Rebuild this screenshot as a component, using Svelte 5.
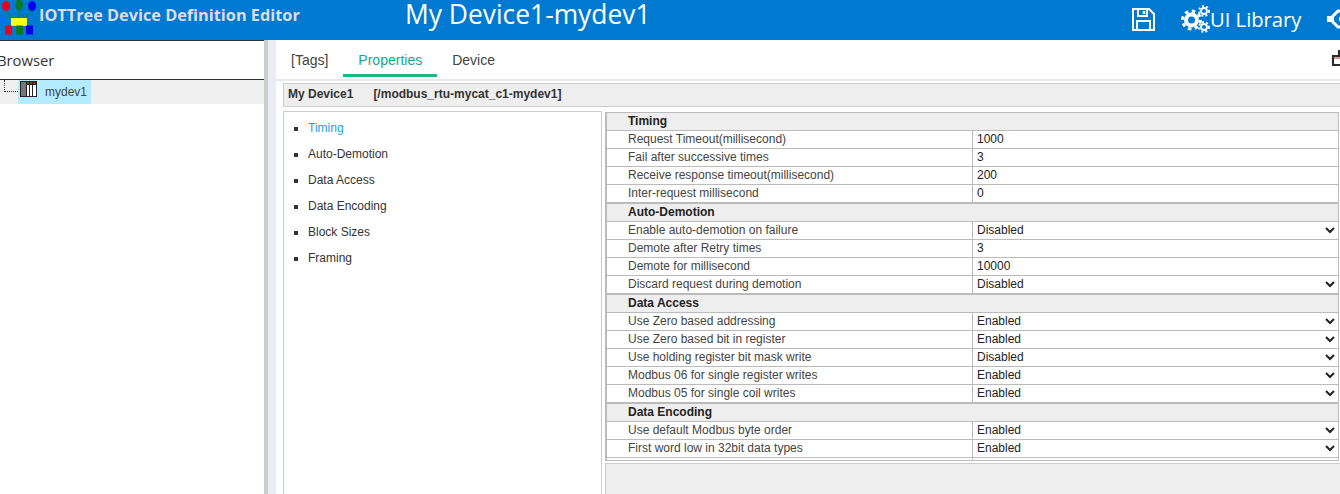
<script>
  const tabs = ['[Tags]', 'Properties', 'Device'];
  const nav = ['Timing', 'Auto-Demotion', 'Data Access', 'Data Encoding', 'Block Sizes', 'Framing'];
  const groups = [
    { title: 'Timing', rows: [
      ['Request Timeout(millisecond)', '1000'],
      ['Fail after successive times', '3'],
      ['Receive response timeout(millisecond)', '200'],
      ['Inter-request millisecond', '0']
    ]},
    { title: 'Auto-Demotion', rows: [
      ['Enable auto-demotion on failure', 'Disabled', true],
      ['Demote after Retry times', '3'],
      ['Demote for millisecond', '10000'],
      ['Discard request during demotion', 'Disabled', true]
    ]},
    { title: 'Data Access', rows: [
      ['Use Zero based addressing', 'Enabled', true],
      ['Use Zero based bit in register', 'Enabled', true],
      ['Use holding register bit mask write', 'Disabled', true],
      ['Modbus 06 for single register writes', 'Enabled', true],
      ['Modbus 05 for single coil writes', 'Enabled', true]
    ]},
    { title: 'Data Encoding', rows: [
      ['Use default Modbus byte order', 'Enabled', true],
      ['First word low in 32bit data types', 'Enabled', true],
      ['', '']
    ]}
  ];
</script>

<div class="page">
  <header class="top">
    <svg class="logo" width="36" height="40" viewBox="0 0 36 40">
      <path d="M6 10 L12 19 M19 12 L19 18 L14 19 M19 14 L26 18 M31 10 L26 19" stroke="#1a7a3a" stroke-width="1" fill="none"/>
      <ellipse cx="6" cy="6" rx="4" ry="5" fill="#e8001c"/>
      <ellipse cx="19" cy="5" rx="4" ry="5.500" fill="#0a7a2a"/>
      <ellipse cx="32" cy="6" rx="4" ry="5" fill="#0000f0"/>
      <rect x="11" y="18" width="16" height="8" fill="#ffff20"/>
      <rect x="5" y="25.500" width="7" height="9" fill="#f00018"/>
      <rect x="16" y="25.500" width="7" height="9" fill="#0a7a2a"/>
      <rect x="26" y="25.500" width="7" height="9" fill="#0000f0"/>
    </svg>
    <span class="brand">IOTTree Device Definition Editor</span>
    <span class="devname">My Device1-mydev1</span>
    <svg class="save" width="24" height="24" viewBox="0 0 24 24" fill="none" stroke="#fff" stroke-width="2">
      <path d="M2 2H18L23 7V23H2Z"/>
      <path d="M7 2V9H16V2"/>
      <path d="M6 23V14H19V23"/>
      <path d="M13 4V7" stroke-width="2.500"/>
    </svg>
    <svg class="cogs" width="30" height="30" viewBox="0 0 30 30" fill="none" stroke="#fff">
      <circle cx="10.500" cy="15" r="5.500" stroke-width="4"/>
      <circle cx="10.500" cy="15" r="9" stroke-width="3" stroke-dasharray="3.500 3.570"/>
      <circle cx="23" cy="6" r="3" stroke-width="1.800"/>
      <circle cx="23" cy="6" r="5" stroke-width="1.800" stroke-dasharray="2 2.190"/>
      <circle cx="23" cy="22" r="3" stroke-width="1.800"/>
      <circle cx="23" cy="22" r="5" stroke-width="1.800" stroke-dasharray="2 2.190"/>
    </svg>
    <span class="lib">UI Library</span>
    <svg class="more" width="24" height="30" viewBox="0 0 24 30" fill="none" stroke="#fff" stroke-width="3">
      <path d="M3 15L11 7H20M3 15L11 23H20"/>
      <path d="M0 15H7" stroke-width="6"/>
      <circle cx="15" cy="15" r="3" fill="#fff" stroke="none"/>
    </svg>
  </header>

  <div class="body">
    <aside class="side">
      <div class="side-title">Browser</div>
      <div class="tree-row">
        <span class="dots"></span>
        <span class="node">
          <svg width="17" height="16" viewBox="0 0 17 16">
            <rect x="0.500" y="0.500" width="16" height="15" fill="#fff" stroke="#222"/>
            <rect x="1" y="1" width="5" height="14" fill="#777"/>
            <rect x="6" y="1" width="10" height="3" fill="#222"/>
            <rect x="7" y="1" width="2" height="2" fill="#0a8a2a"/>
            <rect x="10" y="1" width="2" height="2" fill="#c01818"/>
            <rect x="13" y="1" width="2" height="2" fill="#c01818"/>
            <path d="M6.500 4V15M9.500 4V15M12.500 4V15" stroke="#222" fill="none"/>
          </svg>
          <span class="node-label">mydev1</span>
        </span>
      </div>
    </aside>
    <div class="split"></div>
    <div class="strip"></div>

    <main class="main">
      <nav class="tabs">
        {#each tabs as t, i}
          <span class="tab" class:active={i === 1}>{t}</span>
        {/each}
        <svg class="print" width="10" height="18" viewBox="0 0 10 18" fill="none">
          <path d="M8 0V6H2V15H10" stroke="#2b2b2b" stroke-width="2.200"/>
          <path d="M3 8H10" stroke="#b03020" stroke-width="1"/>
        </svg>
      </nav>
      <div class="bar"><b>My Device1</b><b class="path">[/modbus_rtu-mycat_c1-mydev1]</b></div>
      <div class="panes">
        <ul class="nav">
          {#each nav as n, i}
            <li class:current={i === 0}>{n}</li>
          {/each}
        </ul>
        <div class="right">
          <div class="tablewrap">
            <table>
              <colgroup><col class="c1" /><col /></colgroup>
              {#each groups as g, gi}
                <tbody>
                  <tr class="head" class:first={gi === 0}><th colspan="2">{g.title}</th></tr>
                  {#each g.rows as r}
                    <tr>
                      <td class="k">{r[0]}</td>
                      <td class="v">
                        {#if r[2]}
                          <select><option>{r[1]}</option></select>
                        {:else}
                          {r[1]}
                        {/if}
                      </td>
                    </tr>
                  {/each}
                </tbody>
              {/each}
            </table>
          </div>
          <div class="foot"></div>
        </div>
      </div>
    </main>
  </div>
</div>

<style>
  :global(body) { margin: 0; overflow: hidden; background: #fff; }
  .page {
    width: 1340px; height: 494px; overflow: hidden;
    display: flex; flex-direction: column;
    font-family: "Liberation Sans", Arial, sans-serif; color: #333;
  }
  .top {
    height: 40px; flex: none; background: #007ad0;
    display: flex; align-items: center; overflow: hidden;
    font-family: "Open Sans", "Noto Sans", sans-serif;
  }
  .logo { flex: none; width: 36px; }
  .brand { color: #dcdcec; font-weight: 700; font-size: 16.300px; line-height: 20px; margin-left: 3px; width: 366px; flex: none; margin-top: -10px; white-space: nowrap; }
  .devname { color: #fff; font-size: 26.400px; line-height: 24px; width: 726px; flex: none; margin-top: -13px; white-space: nowrap; }
  .save { flex: none; margin-top: -2px; }
  .cogs { flex: none; margin-left: 26px; margin-top: -1px; }
  .lib { color: #fff; font-size: 20.200px; line-height: 28px; margin-left: -1px; margin-top: -2px; white-space: nowrap; flex: none; }
  .more { flex: none; margin-left: 26px; margin-top: -2px; }

  .body { flex: 1; display: flex; min-height: 0; }
  .side { width: 264px; flex: none; border-top: 1px solid #333; }
  .side-title {
    height: 38px; line-height: 38px; font-size: 14.800px; margin-left: -3px; white-space: nowrap;
    font-family: "Open Sans", "Noto Sans", sans-serif; color: #333;
    border-bottom: 1px solid #333;
  }
  .tree-row { height: 24px; background: #f0f0f0; display: flex; align-items: flex-start; }
  .dots { width: 14px; height: 12px; margin-left: 4px; border-left: 1px dotted #333; border-bottom: 1px dotted #333; flex: none; box-sizing: border-box; }
  .node {
    width: 73px; height: 24px; background: #b3ebff; display: flex; align-items: flex-start;
    box-sizing: border-box; padding-left: 2px; padding-top: 1px; border-radius: 1px;
  }
  .node-label { font-size: 12px; color: #444; margin-left: 8px; margin-top: 4px; }
  .split { width: 4px; flex: none; background: #ccc; }
  .strip { width: 8px; flex: none; background: #e9ecf1; }

  .main { flex: 1; min-width: 0; display: flex; flex-direction: column; padding-left: 7px; padding-top: 1px; }
  .tabs {
    height: 38px; flex: none; display: flex; margin-left: -7px; padding-left: 0;
    border-bottom: 2px solid #e8e8e8; position: relative; box-sizing: content-box;
  }
  .tab {
    font-size: 14px; line-height: 20px; padding: 9px 15px 3px; height: 21px; color: #444;
    border-bottom: 3px solid transparent; box-sizing: content-box; white-space: nowrap;
  }
  .tab.active { color: #0fa890; border-bottom-color: #1fb880; }
  .print { position: absolute; right: -1px; top: 9px; }
  .bar {
    margin-top: 2px; height: 22px; flex: none; box-sizing: content-box;
    background: #eee; border: 1px solid #ccc; border-right: none;
    font-size: 12px; line-height: 20px; padding-left: 4px; color: #333;
    display: flex; gap: 20px; white-space: nowrap;
  }
  .panes { flex: 1; min-height: 0; display: flex; gap: 3px; margin-top: 4px; }
  .nav {
    flex: none; margin: 0; padding: 3px 0 0 24px; box-sizing: border-box; width: 319px;
    border: 1px solid #ccc; border-bottom: none; list-style: none;
    font-size: 12px; color: #333;
  }
  .nav li { height: 26px; line-height: 26px; position: relative; }
  .nav li::before {
    content: ""; position: absolute; left: -14px; top: 12px; width: 4px; height: 4px; background: #333;
  }
  .nav li.current { color: #1ba0e8; }
  .right { flex: 1; min-width: 0; display: flex; flex-direction: column; }
  .tablewrap {
    height: 349px; flex: none; overflow: hidden; margin: 1px 1px 0 0;
    border: 1px solid #bbb; border-left-width: 2px; box-sizing: border-box;
  }
  table { width: 100%; border-collapse: separate; border-spacing: 0; table-layout: fixed; font-size: 12px; }
  .c1 { width: 365px; }
  tr.head.first th { height: 18px; border-top: none; }
  th {
    height: 19px; background: #eee; text-align: left; font-size: 12px; color: #222; padding: 0 0 1px 21px;
    border-top: 1px solid #bbb; border-bottom: 1px solid #bbb; box-sizing: border-box; line-height: 14px;
  }
  td { border-bottom: 1px solid #bbb; padding: 0 0 1px; height: 18px; box-sizing: border-box; line-height: 14px; white-space: nowrap; }
  td.k { padding-left: 21px; color: #444; }
  td.v { border-left: 1px solid #bbb; padding-left: 4px; color: #222; }
  select {
    display: block; width: calc(100% + 4px); margin-left: -4px; height: 16px; border: none; background: #fff; padding: 0;
    font-family: "Liberation Sans", Arial, sans-serif; font-size: 12px; color: #222;
  }
  .foot { flex: 1; margin-top: 2px; background: #eee; border-top: 1px solid #ccc; border-left: 1px solid #ccc; }
</style>
